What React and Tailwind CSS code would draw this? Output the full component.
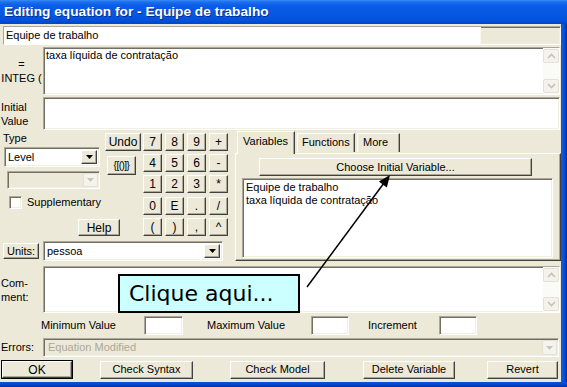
import React from "react";

const raised =
  "bg-[#ECE9D8] border border-t-white border-l-white border-r-[#404040] border-b-[#404040] shadow-[inset_-1px_-1px_0_#ACA899]";
const sunken =
  "border border-t-[#ACA899] border-l-[#ACA899] border-r-white border-b-white shadow-[inset_1px_1px_0_#716F64,inset_-1px_-1px_0_#F1EFE2]";

function Tri({ color = "#000" }) {
  return (
    <svg width="7" height="4" viewBox="0 0 7 4">
      <path d="M0 0 H7 L3.5 4 Z" fill={color} />
    </svg>
  );
}

function DropBtn() {
  return (
    <div className={`${raised} w-[16px] h-full flex items-center justify-center shrink-0`}>
      <Tri />
    </div>
  );
}

function XPDisabledBtn() {
  return (
    <div className="w-[15px] h-full rounded-[2px] border border-[#E3E1D6] bg-[#F4F3EE] flex items-center justify-center shrink-0">
      <Tri color="#C9C7BA" />
    </div>
  );
}

function Chevron({ up }) {
  return (
    <svg width="9" height="6" viewBox="0 0 9 6">
      <path
        d={up ? "M1 5 L4.5 1.5 L8 5" : "M1 1 L4.5 4.5 L8 1"}
        stroke="#C5C2B2"
        strokeWidth="1.6"
        fill="none"
      />
    </svg>
  );
}

function ScrollV() {
  return (
    <div className="w-[16px] h-full flex flex-col bg-[#FAFAF7] shrink-0 py-[1px]">
      <div className="h-[14px] w-[16px] rounded-[2px] border border-[#E3E1D6] bg-[#F3F2EC] flex items-center justify-center">
        <Chevron up />
      </div>
      <div className="flex-1" />
      <div className="h-[14px] w-[16px] rounded-[2px] border border-[#E3E1D6] bg-[#F3F2EC] flex items-center justify-center">
        <Chevron />
      </div>
    </div>
  );
}

function Key({ children, className = "" }) {
  return (
    <div className={`${raised} h-[18px] flex items-center justify-center text-[12px] leading-none ${className}`}>
      {children}
    </div>
  );
}

export default function App() {
  const keys = ["7", "8", "9", "+", "4", "5", "6", "-", "1", "2", "3", "*", "0", "E", ".", "/", "(", ")", ",", "^"];
  return (
    <div className="w-[567px] h-[387px] overflow-hidden relative flex flex-col bg-[#ECE9D8] font-['Liberation_Sans',Arial,sans-serif] text-[11px] text-black">
      {/* title bar */}
      <div className="h-[24px] shrink-0 flex items-center pl-[4px] bg-[linear-gradient(to_bottom,#3A8CF5_0%,#1E6FF0_8%,#0A5DE6_22%,#0557E3_60%,#0451DB_85%,#0046C8_100%)]">
        <span className="text-white font-bold text-[13.7px] leading-none [text-shadow:1px_1px_0_#0A2A8A]">
          Editing equation for - Equipe de trabalho
        </span>
      </div>

      <div className="flex flex-1 min-h-0">
        <div className="w-[561px] flex flex-col">
          {/* name row */}
          <div className={`${sunken} mt-[2px] ml-[3px] w-[558px] h-[19px] flex bg-[#ECE9D8]`}>
            <div className="w-[476px] h-full bg-white flex items-center pl-[2px] leading-none">Equipe de trabalho</div>
            <div className="flex-1 border-l border-[#F8F7F2]" />
          </div>

          {/* equation row */}
          <div className="mt-[2px] h-[48px] flex">
            <div className="w-[43px] flex flex-col items-center justify-center leading-[14px] text-[11px]">
              <span>=</span>
              <span className="whitespace-nowrap">INTEG (</span>
            </div>
            <div className={`${sunken} w-[517px] h-full bg-white flex`}>
              <div className="flex-1 pl-[2px] pt-[1px] leading-[13px]">taxa líquida de contratação</div>
              <ScrollV />
            </div>
          </div>

          {/* initial value */}
          <div className="mt-[2px] h-[33px] flex">
            <div className="w-[43px] pl-[1px] flex flex-col justify-center leading-[14px]">
              <span>Initial</span>
              <span>Value</span>
            </div>
            <div className={`${sunken} w-[517px] h-full bg-white`} />
          </div>

          {/* middle */}
          <div className="mt-[1px] h-[131px] flex">
            <div className="w-[235px] flex flex-col">
              <div className="flex">
                <div className="w-[143px] flex flex-col">
                  <div className="flex">
                    <div className="w-[105px] flex flex-col">
                      <div className="pl-[3px] pt-[1px] h-[13px] leading-[13px]">Type</div>
                      <div className={`${sunken} ml-[4px] mt-[3px] w-[96px] h-[20px] bg-white flex p-[2px] pl-[3px]`}>
                        <span className="flex-1 leading-[14px]">Level</span>
                        <DropBtn />
                      </div>
                      <div className={`${sunken} ml-[7px] mt-[4px] w-[93px] h-[18px] bg-[#ECE9D8] flex p-[1px] justify-end`}>
                        <XPDisabledBtn />
                      </div>
                    </div>
                    <div className="flex flex-col">
                      <div className={`${raised} mt-[2px] w-[36px] h-[18px] flex items-center justify-center text-[12px] leading-none`}>Undo</div>
                      <div className={`${raised} mt-[5px] ml-[2px] w-[29px] h-[19px] flex items-center justify-center text-[10px] leading-none tracking-[-0.5px]`}>{"{[()]}"}</div>
                    </div>
                  </div>
                  <div className="mt-[7px] flex items-center h-[13px]">
                    <div className={`${sunken} ml-[9px] w-[13px] h-[13px] bg-white`} />
                    <span className="ml-[5px] leading-none">Supplementary</span>
                  </div>
                  <div className={`${raised} mt-[10px] ml-[78px] w-[42px] h-[17px] flex items-center justify-center text-[12px] leading-none`}>Help</div>
                </div>
                <div className="mt-[2px] grid grid-cols-[19px_19px_19px_19px] gap-x-[3px] gap-y-[3px]">
                  {keys.map((k) => (
                    <Key key={k}>{k}</Key>
                  ))}
                </div>
              </div>
              <div className="mt-[5px] flex items-center h-[20px]">
                <div className={`${raised} ml-[3px] w-[36px] h-[16px] flex items-center justify-center leading-none`}>Units:</div>
                <div className={`${sunken} ml-[4px] w-[180px] h-[20px] bg-white flex p-[2px] pl-[3px]`}>
                  <span className="flex-1 leading-[14px]">pessoa</span>
                  <DropBtn />
                </div>
              </div>
            </div>

            {/* tab panel */}
            <div className="w-[326px] flex flex-col">
              <div className="h-[22px] flex items-end pl-[2px] relative z-10">
                <div className="w-[58px] h-[23px] mb-[-1px] bg-[#ECE9D8] border border-b-0 border-t-white border-l-white border-r-[#404040] shadow-[inset_-1px_0_0_#ACA899] pl-[5px] pt-[4px] leading-none">
                  Variables
                </div>
                <div className="ml-[2px] w-[58px] h-[19px] mb-[1px] border border-b-0 border-t-white border-l-white border-r-[#404040] shadow-[inset_-1px_0_0_#ACA899] pl-[4px] pt-[3px] leading-none">
                  Functions
                </div>
                <div className="ml-[2px] w-[43px] h-[19px] mb-[1px] border border-b-0 border-t-white border-l-white border-r-[#404040] shadow-[inset_-1px_0_0_#ACA899] pl-[5px] pt-[3px] leading-none">
                  More
                </div>
              </div>
              <div className={`${raised} h-[108px] flex flex-col`}>
                <div className={`${raised} mt-[4px] ml-[23px] w-[273px] h-[18px] flex items-center justify-center leading-none`}>
                  Choose Initial Variable...
                </div>
                <div className={`${sunken} mt-[2px] ml-[6px] w-[311px] h-[80px] bg-white pl-[3px] pt-[2px] leading-[13px]`}>
                  <div>Equipe de trabalho</div>
                  <div>taxa líquida de contratação</div>
                </div>
              </div>
            </div>
          </div>

          {/* comment */}
          <div className="mt-[4px] h-[47px] flex">
            <div className="w-[43px] pl-[1px] flex flex-col justify-center leading-[14px]">
              <span>Com-</span>
              <span>ment:</span>
            </div>
            <div className={`${sunken} w-[517px] h-full bg-white flex justify-end`}>
              <ScrollV />
            </div>
          </div>

          {/* min / max */}
          <div className="mt-[3px] h-[19px] flex items-center">
            <span className="ml-[41px] w-[103px] leading-none">Minimum Value</span>
            <div className={`${sunken} w-[39px] h-[19px] bg-white`} />
            <span className="ml-[24px] w-[104px] leading-none">Maximum Value</span>
            <div className={`${sunken} w-[38px] h-[19px] bg-white`} />
            <span className="ml-[19px] w-[71px] leading-none">Increment</span>
            <div className={`${sunken} w-[38px] h-[19px] bg-white`} />
          </div>

          {/* errors */}
          <div className="mt-[3px] h-[19px] flex items-center">
            <span className="w-[43px] pl-[1px] leading-none">Errors:</span>
            <div className={`${sunken} w-[516px] h-[19px] bg-[#ECE9D8] flex p-[1px] pl-[4px]`}>
              <span className="flex-1 text-[#ACA899] leading-[15px]">Equation Modified</span>
              <XPDisabledBtn />
            </div>
          </div>

          {/* buttons */}
          <div className="mt-[3px] h-[19px] flex items-center">
            <div className="ml-[1px] w-[72px] h-[19px] border border-black">
              <div className={`${raised} w-full h-full flex items-center justify-center leading-none text-[12px]`}>OK</div>
            </div>
            <div className={`${raised} ml-[27px] w-[93px] h-[18px] flex items-center justify-center leading-none`}>Check Syntax</div>
            <div className={`${raised} ml-[37px] w-[95px] h-[18px] flex items-center justify-center leading-none`}>Check Model</div>
            <div className={`${raised} ml-[38px] w-[92px] h-[18px] flex items-center justify-center leading-none`}>Delete Variable</div>
            <div className={`${raised} ml-[32px] w-[71px] h-[18px] flex items-center justify-center leading-none`}>Revert</div>
          </div>
        </div>
        <div className="w-[6px] bg-[linear-gradient(to_right,#0B5CE6,#0852DA_50%,#00309C)]" />
      </div>
      <div className="h-[5px] shrink-0 bg-[linear-gradient(to_bottom,#0852DA,#0545C8_60%,#00309C)]" />

      {/* callout */}
      <div className="absolute left-[118px] top-[274px] w-[182px] h-[39px] border-2 border-black bg-[#CCFFFF] pl-[9px] flex items-center font-['DejaVu_Sans',Verdana,sans-serif] text-[22px] leading-none">
        Clique aqui...
      </div>
      <svg className="absolute left-0 top-0 pointer-events-none" width="567" height="387" viewBox="0 0 567 387">
        <line x1="307" y1="287" x2="384" y2="183" stroke="#000" strokeWidth="1.5" />
        <polygon points="390,175 386.9,187.6 378.9,181.6" fill="#000" />
      </svg>
    </div>
  );
}
